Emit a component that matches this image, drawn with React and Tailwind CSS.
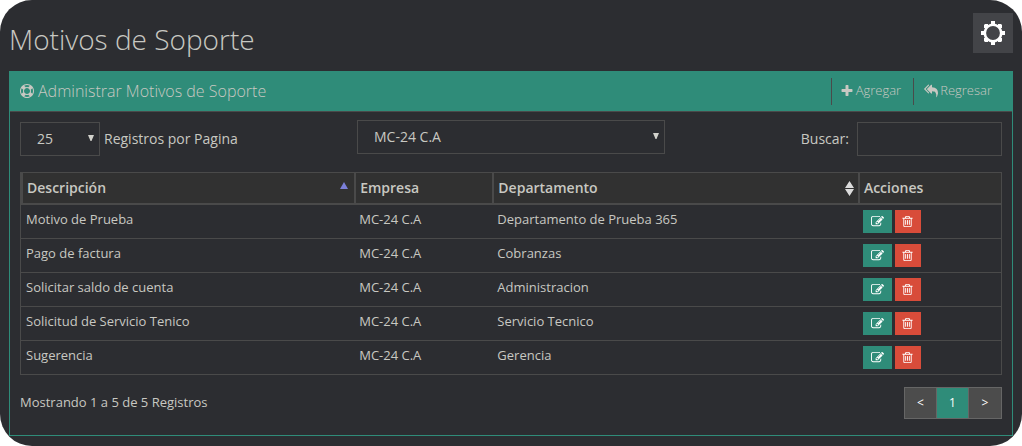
import React from "react";

const ICONS = {
  lifeRing:
    "M896 0q182 0 348 71t286 191 191 286 71 348-71 348-191 286-286 191-348 71-348-71-286-191-191-286-71-348 71-348 191-286 286-191 348-71zm0 128q-190 0-361 90l194 194q82-28 167-28t167 28l194-194q-171-90-361-90zm-678 1129l194-194q-28-82-28-167t28-167l-194-194q-90 171-90 361t90 361zm678 407q190 0 361-90l-194-194q-82 28-167 28t-167-28l-194 194q171 90 361 90zm0-384q159 0 271.5-112.5t112.5-271.5-112.5-271.5-271.5-112.5-271.5 112.5-112.5 271.5 112.5 271.5 271.5 112.5zm484-217l194 194q90-171 90-361t-90-361l-194 194q28 82 28 167t-28 167z",
  plus: "M1600 736v192q0 40-28 68t-68 28h-416v416q0 40-28 68t-68 28h-192q-40 0-68-28t-28-68v-416h-416q-40 0-68-28t-28-68v-192q0-40 28-68t68-28h416v-416q0-40 28-68t68-28h192q40 0 68 28t28 68v416h416q40 0 68 28t28 68z",
  replyAll:
    "M640 1082v70q0 42-39 59-13 5-25 5-27 0-45-19l-512-512q-19-19-19-45t19-45l512-512q29-31 70-14 39 17 39 59v69l-397 398q-19 19-19 45t19 45zm1152 58q0 58-17 133.5t-38.5 138-48 125-40.5 90.5l-20 40q-8 17-28 17-6 0-9-1-25-8-23-34 43-400-106-565-64-71-170.5-110.5t-267.5-52.5v251q0 42-39 59-13 5-25 5-27 0-45-19l-512-512q-19-19-19-45t19-45l512-512q29-31 70-14 39 17 39 59v262q411 28 599 221 169 173 169 509z",
  edit: "M888 1184l116-116-152-152-116 116v56h96v96h56zm440-720q-16-16-33 1l-350 350q-17 17-1 33t33-1l350-350q17-17 1-33zm80 594v190q0 119-84.5 203.5t-203.5 84.5h-832q-119 0-203.5-84.5t-84.5-203.5v-832q0-119 84.5-203.5t203.5-84.5h832q63 0 117 25 15 7 18 23 3 17-9 29l-49 49q-14 14-32 8-23-6-45-6h-832q-66 0-113 47t-47 113v832q0 66 47 113t113 47h832q66 0 113-47t47-113v-126q0-13 9-22l64-64q15-15 35-7t20 29zm-96-738l288 288-672 672h-288v-288zm444 132l-92 92-288-288 92-92q28-28 68-28t68 28l152 152q28 28 28 68t-28 68z",
  trash:
    "M704 736v576q0 14-9 23t-23 9h-64q-14 0-23-9t-9-23v-576q0-14 9-23t23-9h64q14 0 23 9t9 23zm256 0v576q0 14-9 23t-23 9h-64q-14 0-23-9t-9-23v-576q0-14 9-23t23-9h64q14 0 23 9t9 23zm256 0v576q0 14-9 23t-23 9h-64q-14 0-23-9t-9-23v-576q0-14 9-23t23-9h64q14 0 23 9t9 23zm128 724v-948h-896v948q0 22 7 40.5t14.5 27 10.5 8.5h832q3 0 10.5-8.5t14.5-27 7-40.5zm-672-1076h448l-48-117q-7-9-17-11h-317q-10 2-17 11zm928 32v64q0 14-9 23t-23 9h-96v948q0 83-47 143.5t-113 60.5h-832q-66 0-113-58.5t-47-141.5v-952h-96q-14 0-23-9t-9-23v-64q0-14 9-23t23-9h309l70-167q15-37 54-63t79-26h320q40 0 79 26t54 63l70 167h309q14 0 23 9t9 23z",
};

function Icon({ name, className }) {
  return (
    <svg viewBox="0 0 1792 1792" fill="currentColor" aria-hidden="true" className={className}>
      <path d={ICONS[name]} />
    </svg>
  );
}

function Gear() {
  return (
    <svg viewBox="-12 -12 24 24" className="size-6" aria-hidden="true">
      <circle r="8.2" fill="none" stroke="#fff" strokeWidth="2.6" />
      {[0, 90, 180, 270].map((a) => (
        <path
          key={a}
          d="M-2 -12H2V-9.5L3 -8H-3L-2 -9.5ZM5 -9H8L9 -8V-5H7L5 -7Z"
          fill="#fff"
          transform={`rotate(${a})`}
        />
      ))}
    </svg>
  );
}

function Caret({ className }) {
  return (
    <svg viewBox="0 0 6 6" fill="#d2d2cc" aria-hidden="true" className={className}>
      <path d="M0 0H6L3.5 6H2.5Z" />
    </svg>
  );
}

function Select({ label, id, className, children }) {
  return (
    <div className={"relative " + className}>
      <select
        id={id}
        aria-label={label}
        className="block h-[34px] w-full appearance-none border border-[#4a4a4a] bg-transparent px-4 text-sm text-[#c8c8c2]"
      >
        {children}
      </select>
      <Caret className="pointer-events-none absolute right-1.5 top-[13px] size-1.5" />
    </div>
  );
}

const ROWS = [
  ["Motivo de Prueba", "MC-24 C.A", "Departamento de Prueba 365"],
  ["Pago de factura", "MC-24 C.A", "Cobranzas"],
  ["Solicitar saldo de cuenta", "MC-24 C.A", "Administracion"],
  ["Solicitud de Servicio Tenico", "MC-24 C.A", "Servicio Tecnico"],
  ["Sugerencia", "MC-24 C.A", "Gerencia"],
];

const TH =
  "h-[33px] border-b-2 border-l-2 border-t border-[#4a4a4a] px-1 text-left text-sm font-semibold";
const TD = "h-[34px] border-b border-[#4a4a4a] pl-[5px] pt-[5px] align-top leading-[18px]";

export default function App() {
  return (
    <main className="overflow-hidden rounded-[32px] bg-[#2c2d31] px-[9px] pb-2.5 pt-[13px] font-['Open_Sans',sans-serif] text-[13px] text-[#c8c8c2]">
      <header className="flex h-[58px] items-start justify-between">
        <h1 className="pt-1.5 text-[28px] font-light leading-10">Motivos de Soporte</h1>
        <button aria-label="Configuración" className="flex size-10 items-center justify-center bg-[#434448]">
          <Gear />
        </button>
      </header>

      <section className="border border-t-0 border-[#2f8c79]">
        <div className="flex h-10 items-center justify-between bg-[#2f8c79] px-2.5">
          <h2 className="flex items-center gap-1 text-base font-light">
            <Icon name="lifeRing" className="size-3.5" />
            Administrar Motivos de Soporte
          </h2>
          <nav className="flex text-[13px] font-light">
            <a href="#agregar" className="flex h-[27px] items-center gap-0.5 border-l border-[#4a4a4a] pl-2 pr-3">
              <Icon name="plus" className="size-3.5" />
              Agregar
            </a>
            <a href="#regresar" className="flex h-[27px] items-center gap-0.5 border-l border-[#4a4a4a] px-2.5">
              <Icon name="replyAll" className="size-3.5" />
              Regresar
            </a>
          </nav>
        </div>

        <div className="border-t border-[#4a4a4a] px-2.5 pb-4">
          <div className="flex items-start justify-between pt-2 text-sm">
            <div className="flex flex-1 items-center gap-1 pt-0.5">
              <Select id="registros" label="Registros por Pagina" className="w-20">
                <option>25</option>
              </Select>
              <label htmlFor="registros">Registros por Pagina</label>
            </div>
            <Select label="Empresa" id="empresa" className="w-[308px]">
              <option>MC-24 C.A</option>
            </Select>
            <div className="flex flex-1 items-center justify-end gap-2 pt-0.5">
              <label htmlFor="buscar">Buscar:</label>
              <input
                id="buscar"
                type="text"
                className="h-[34px] w-[145px] border border-[#4a4a4a] bg-transparent px-2"
              />
            </div>
          </div>

          <table className="mt-4 w-full table-fixed border-separate border-spacing-0 border-l border-r border-[#4a4a4a]">
            <colgroup>
              <col className="w-[34%]" />
              <col className="w-[14.1%]" />
              <col className="w-[37.3%]" />
              <col className="w-[14.6%]" />
            </colgroup>
            <thead className="bg-[#313131]">
              <tr>
                <th className={TH}>
                  <div className="flex items-center justify-between pr-0.5">
                    Descripción
                    <svg viewBox="0 0 8 7" className="mb-1.5 h-[7px] w-2" aria-hidden="true">
                      <path d="M4 0L8 7H0Z" fill="#7b7fd8" />
                    </svg>
                  </div>
                </th>
                <th className={TH}>Empresa</th>
                <th className={TH}>
                  <div className="flex items-center justify-between">
                    Departamento
                    <svg viewBox="0 0 9 15" className="h-[15px] w-[9px]" aria-hidden="true">
                      <path d="M4.5 0L9 7H0ZM0 8H9L4.5 15Z" fill="#dcdcdc" />
                    </svg>
                  </div>
                </th>
                <th className={TH}>Acciones</th>
              </tr>
            </thead>
            <tbody>
              {ROWS.map(([descripcion, empresa, departamento]) => (
                <tr key={descripcion}>
                  <td className={TD}>{descripcion}</td>
                  <td className={TD}>{empresa}</td>
                  <td className={TD}>{departamento}</td>
                  <td className={TD}>
                    <div className="flex gap-[3px]">
                      <button aria-label="Editar" className="flex h-[23px] w-[29px] items-center justify-center bg-[#2f8c79] text-white">
                        <Icon name="edit" className="size-[13px]" />
                      </button>
                      <button aria-label="Eliminar" className="flex h-[23px] w-[26px] items-center justify-center bg-[#d84c3a] text-white">
                        <Icon name="trash" className="size-[13px]" />
                      </button>
                    </div>
                  </td>
                </tr>
              ))}
            </tbody>
          </table>

          <footer className="mt-3 flex items-center justify-between">
            <p>Mostrando 1 a 5 de 5 Registros</p>
            <nav aria-label="Paginación" className="flex divide-x divide-[#666] border border-[#666] bg-[#4c4c4c] text-xs text-white">
              <button aria-label="Anterior" className="h-[30px] w-8">&lt;</button>
              <button aria-current="page" className="h-[30px] w-8 bg-[#2f8c79]">1</button>
              <button aria-label="Siguiente" className="h-[30px] w-8">&gt;</button>
            </nav>
          </footer>
        </div>
      </section>
    </main>
  );
}
